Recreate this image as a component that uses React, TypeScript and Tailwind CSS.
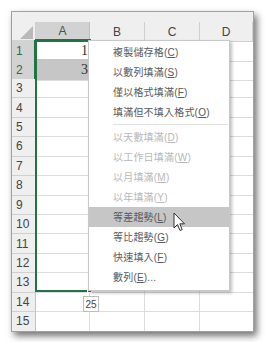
import React from 'react';

type MenuItem = { label: string; key: string; tail?: string; disabled?: boolean; active?: boolean; sep?: boolean };

const menuItems: MenuItem[] = [
  { label: '複製儲存格', key: 'C' },
  { label: '以數列填滿', key: 'S' },
  { label: '僅以格式填滿', key: 'F' },
  { label: '填滿但不填入格式', key: 'O' },
  { label: '', key: '', sep: true },
  { label: '以天數填滿', key: 'D', disabled: true },
  { label: '以工作日填滿', key: 'W', disabled: true },
  { label: '以月填滿', key: 'M', disabled: true },
  { label: '以年填滿', key: 'Y', disabled: true },
  { label: '等差趨勢', key: 'L', active: true },
  { label: '等比趨勢', key: 'G' },
  { label: '快速填入', key: 'F' },
  { label: '數列', key: 'E', tail: '...' },
];

const rows = Array.from({ length: 15 }, (_, i) => i + 1);
const cols = ['A', 'B', 'C', 'D'];

const font = { fontFamily: '"Liberation Sans", "Noto Sans CJK TC", sans-serif' };

const ContextMenu = () => (
  <div className="absolute left-[88px] top-[40px] w-[142px] bg-white border border-[#c8c8c8] shadow-[2px_2px_3px_rgba(0,0,0,0.25)] pt-[1px] pb-[3px]">
    {menuItems.map((m, i) =>
      m.sep ? (
        <div key={i} className="h-[5px] flex items-center pl-[24px] pr-[1px]">
          <div className="h-px w-full bg-[#e2e2e2]" />
        </div>
      ) : (
        <div
          key={i}
          className={`h-[20px] flex items-center pl-[24px] text-[10px] tracking-[0.2px] ${m.active ? 'bg-[#c6c6c6]' : ''} ${m.disabled ? 'text-[#b8b8b8]' : 'text-[#595959]'}`}
        >
          <span>{m.label}</span>
          <span>(</span>
          <span className="underline underline-offset-1">{m.key}</span>
          <span>)</span>
          {m.tail && <span>{m.tail}</span>}
        </div>
      )
    )}
  </div>
);

const Cursor = () => (
  <svg className="absolute left-[173px] top-[212px]" width="13" height="20" viewBox="0 0 13 20">
    <path d="M1 1 L1 16 L4.5 12.5 L7 18.5 L9.2 17.6 L6.8 11.8 L11.5 11.8 Z" fill="#fff" stroke="#333" strokeWidth="1" strokeLinejoin="round" />
  </svg>
);

export default function App() {
  return (
    <div className="relative w-[265px] h-[342px] bg-white overflow-hidden" style={font}>
      <div className="pt-[11px] pl-[11px]">
        <div className="w-[243px] h-[321px] border border-[#a0a0a0] bg-white shadow-[3px_4px_7px_rgba(0,0,0,0.55)] flex flex-col overflow-hidden">
          <div className="h-[10px] bg-[#efefef] shrink-0" />
          <div className="grid grid-cols-[24px_54px_55px_55px_1fr] h-[18px] shrink-0">
            <div className="bg-[#efefef] border-r border-b border-[#d0d0d0] flex items-end justify-end pr-[2px] pb-[2px]">
              <div className="w-0 h-0 border-l-[13px] border-l-transparent border-b-[13px] border-b-[#b9b9b9]" />
            </div>
            {cols.map((c) => (
              <div
                key={c}
                className={`flex items-center justify-center text-[12px] ${
                  c === 'A'
                    ? 'bg-[#d2d2d2] border-b-2 border-[#217346] text-[#2f5f45] border-r border-r-[#c0c0c0]'
                    : 'bg-[#efefef] border-b border-r border-[#d0d0d0] text-[#444]'
                }`}
              >
                {c}
              </div>
            ))}
          </div>
          <div className="flex flex-col">
            {rows.map((r) => {
              const sel = r <= 2;
              return (
                <div key={r} className="grid grid-cols-[24px_54px_55px_55px_1fr] h-[19.45px]">
                  <div
                    className={`flex items-center pl-[4px] text-[12px] border-b ${
                      sel
                        ? 'bg-[#d2d2d2] text-[#217346] border-[#c0c0c0] border-r-2 border-r-[#217346]'
                        : 'bg-[#efefef] text-[#444] border-[#d0d0d0] border-r border-r-[#c0c0c0]'
                    }`}
                  >
                    {r}
                  </div>
                  <div
                    className={`border-r border-b border-[#dcdcdc] flex items-center justify-end pr-[1px] text-[14px] text-[#333] ${r === 2 ? 'bg-[#c6c6c6]' : ''}`}
                    style={{ fontFamily: '"Liberation Serif", serif' }}
                  >
                    {r === 1 ? '1' : r === 2 ? '3' : ''}
                  </div>
                  <div className="border-r border-b border-[#dcdcdc]" />
                  <div className="border-r border-b border-[#dcdcdc]" />
                  <div className="border-b border-[#dcdcdc]" />
                </div>
              );
            })}
          </div>
        </div>
      </div>

      {/* fill selection outline */}
      <div className="absolute left-[35px] top-[39px] w-[56px] h-[253px] border-2 border-[#217346]" />
      <div className="absolute left-[87px] top-[288px] w-[5px] h-[5px] bg-[#217346] border border-white" />

      {/* fill value tip */}
      <div className="absolute left-[83px] top-[296px] w-[16px] h-[16px] bg-white border border-[#bdbdbd] flex items-center justify-center text-[10px] text-[#444]">
        25
      </div>

      <ContextMenu />
      <Cursor />
    </div>
  );
}
